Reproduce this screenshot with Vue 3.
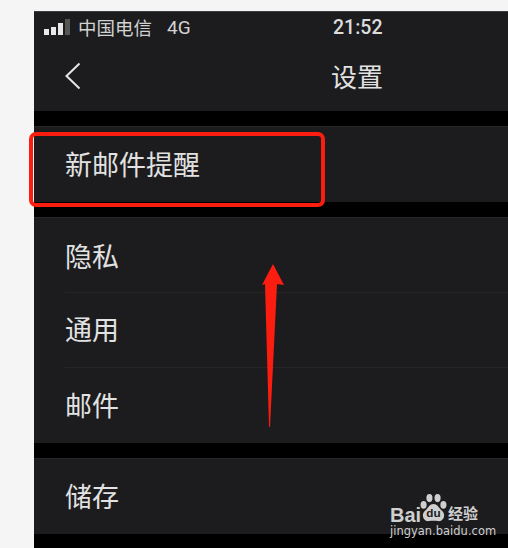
<script setup>
const groups = [
  [{ label: '新邮件提醒' }],
  [{ label: '隐私' }, { label: '通用' }, { label: '邮件' }],
  [{ label: '储存' }],
]
</script>

<template>
  <div class="page">
    <div class="phone">
      <header class="head">
        <div class="status">
          <div class="left">
            <span class="signal"><i class="b1"></i><i class="b2"></i><i class="b3"></i><i class="b4"></i></span>
            <span class="carrier">中国电信</span>
            <span class="net">4G</span>
          </div>
          <span class="time">21:52</span>
        </div>
        <div class="nav">
          <svg class="back" width="18" height="28" viewBox="0 0 18 28">
            <path d="M15.5 1.5 L2.5 14 L15.5 26.5" fill="none" stroke="#e6e6e6" stroke-width="2" />
          </svg>
          <span class="title">设置</span>
        </div>
      </header>
      <section v-for="(g, i) in groups" :key="i" class="group">
        <div v-for="r in g" :key="r.label" class="row"><span class="row-text">{{ r.label }}</span></div>
      </section>
    </div>

    <div class="mark"></div>

    <svg class="arrow" width="24" height="166" viewBox="0 0 24 166">
      <path d="M11 0 L22 21 L15 20 L8 163 L7 163 L3 20 L0 21 Z" fill="#fb1e10" />
    </svg>

    <div class="logo">
      <div class="logo-top">
        <span class="bai">Bai</span>
        <svg class="paw" width="27" height="28" viewBox="0 0 30 31">
          <g fill="#cfcfcf">
            <ellipse cx="4" cy="12" rx="3.4" ry="4.4" />
            <ellipse cx="10.5" cy="4.5" rx="3.4" ry="4.5" />
            <ellipse cx="19.5" cy="4.5" rx="3.4" ry="4.5" />
            <ellipse cx="26" cy="12" rx="3.4" ry="4.4" />
            <path d="M15 11 C20 11 21 16 25 19 C29 23 26 31 20 30 C17 29.500 13 29.500 10 30 C4 31 1 23 5 19 C9 16 10 11 15 11 Z" />
          </g>
          <text x="15" y="26" text-anchor="middle" class="du">du</text>
        </svg>
        <span class="jy">经验</span>
      </div>
      <div class="url">jingyan.baidu.com</div>
    </div>
  </div>
</template>

<style scoped>
.page {
  position: relative;
  width: 508px;
  height: 548px;
  overflow: hidden;
  background: #f5f5f5;
  padding: 11px 0 0 34px;
  box-sizing: border-box;
  font-family: "Noto Sans CJK SC", "Liberation Sans", sans-serif;
}
.phone {
  height: 537px;
  background: #000;
  border-top: 1px solid #3c3c3c;
  box-sizing: border-box;
  overflow: hidden;
}
.head {
  height: 99px;
  background: #1c1c1e;
}
.status {
  position: relative;
  height: 33px;
  color: #d2d2d2;
}
.left {
  display: flex;
  align-items: center;
  height: 30px;
  padding-left: 10px;
}
.signal {
  display: flex;
  align-items: flex-end;
  gap: 2px;
  width: 27px;
  height: 16px;
}
.signal i {
  display: block;
  width: 5px;
  background: #e8e8e8;
}
.b1 { height: 6px; }
.b2 { height: 8px; }
.b3 { height: 12px; }
.signal .b4 { height: 16px; background: #555; }
.carrier {
  margin-left: 7px;
  font-size: 18.500px;
  line-height: 24px;
}
.net {
  margin-left: 15px;
  font-family: Roboto, sans-serif;
  font-size: 19px;
}
.time {
  position: absolute;
  left: 299px;
  top: 5px;
  font-family: Roboto, sans-serif;
  font-size: 19.500px;
  font-weight: 500;
  line-height: 22px;
  color: #dcdcdc;
}
.nav {
  position: relative;
  height: 66px;
  display: flex;
  align-items: center;
  padding-left: 30px;
}
.back { margin-top: -4px; }
.title {
  position: absolute;
  left: 297px;
  top: 13px;
  font-size: 26px;
  line-height: 36px;
  color: #e2e2e2;
}
.group {
  margin-top: 15px;
  background: #1c1c1e;
  border-top: 1px solid #262628;
  padding-left: 31px;
}
.row {
  height: 75px;
  display: flex;
  align-items: center;
  border-top: 1px solid #262628;
  box-sizing: border-box;
}
.row:first-child { border-top: 0; height: 74px; padding-top: 3px; }
.row:last-child { height: 76px; }
.row:only-child { height: 75px; padding-top: 0; }
.row-text {
  font-size: 27px;
  line-height: 36px;
  color: #e2e2e2;
  margin-top: -2px;
}
.mark {
  position: absolute;
  left: 29px;
  top: 132px;
  width: 296px;
  height: 75px;
  border: 4px solid #fb1e10;
  border-radius: 7px;
  box-sizing: border-box;
}
.arrow {
  position: absolute;
  left: 262px;
  top: 264px;
}
.logo {
  position: absolute;
  left: 390px;
  top: 492px;
  width: 112px;
  color: #cfcfcf;
}
.logo-top {
  display: flex;
  align-items: flex-end;
  height: 30px;
}
.bai {
  font-family: "Liberation Sans", sans-serif;
  font-weight: 700;
  font-size: 20px;
  line-height: 20px;
  width: 30px;
  margin-bottom: -3px;
}
.du {
  font-family: "Liberation Sans", sans-serif;
  font-size: 13px;
  font-weight: 700;
  fill: #1c1c1e;
}
.jy {
  font-size: 15px;
  font-weight: 700;
  line-height: 18px;
  margin-left: 1px;
}
.url {
  font-family: "DejaVu Sans", sans-serif;
  font-size: 11.500px;
  line-height: 14px;
  white-space: nowrap;
  margin-top: 2px;
}
</style>
